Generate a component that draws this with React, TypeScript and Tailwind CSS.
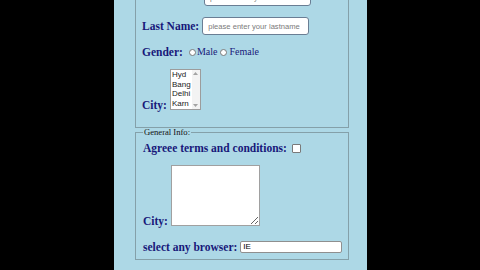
import React from "react";

const label =
  "font-['Liberation_Serif',serif] font-bold text-[11.5px] leading-[14px] text-[#18187a] whitespace-nowrap";
const textInput =
  "h-[18px] w-[107px] rounded-[3px] border border-[#6a7e94] bg-white px-[5px] font-['Liberation_Sans',sans-serif] text-[7.6px] text-black outline-none placeholder:text-[#7a7a7a]";

function Radio() {
  return <span className="inline-block h-[7px] w-[7px] shrink-0 rounded-full border border-[#7a7a7a] bg-white" />;
}

function ListBox() {
  const items = ["Hyd", "Bang", "Delhi", "Karn"];
  return (
    <div className="flex h-[41px] w-[31px] border border-[#9c9c9c] bg-white">
      <div className="flex-1 overflow-hidden pl-[1px] pt-[0px]">
        {items.map((c) => (
          <div
            key={c}
            className="whitespace-nowrap font-['Liberation_Sans',sans-serif] text-[8px] leading-[9.7px] text-[#222]"
          >
            {c}
          </div>
        ))}
      </div>
      <div className="flex w-[8px] flex-col items-center justify-between bg-[#f3f3f3] py-[2px]">
        <svg width="5" height="3" viewBox="0 0 5 3">
          <path d="M0 3 L2.5 0 L5 3 Z" fill="#a3a3a3" />
        </svg>
        <svg width="5" height="3" viewBox="0 0 5 3">
          <path d="M0 0 L2.5 3 L5 0 Z" fill="#a3a3a3" />
        </svg>
      </div>
    </div>
  );
}

export default function App() {
  return (
    <div className="flex h-[270px] w-[480px] overflow-hidden bg-black">
      <div className="ml-[114px] flex h-[270px] w-[253px] flex-col overflow-hidden bg-[#add8e6] pl-[21px]">
        {/* Fieldset 1 */}
        <fieldset className="-mt-[19px] w-[214px] shrink-0 border border-[#84a0a9] pb-[17px] pl-[6px] pt-[6px]">
          <div className="flex h-[18px] items-start gap-[3px]">
            <span className={`${label} -mt-[8px]`}>First Name:</span>
            <input className={textInput} placeholder="please enter your firstname" readOnly />
          </div>
          <div className="mt-[11px] flex h-[18px] items-center gap-[3px]">
            <span className={label}>Last Name:</span>
            <input className={textInput} placeholder="please enter your lastname" readOnly />
          </div>
          <div className="mt-[10px] flex h-[14px] items-center">
            <span className={label}>Gender:</span>
            <span className="ml-[6px] flex items-center gap-[1px]">
              <Radio />
              <span className="font-['Liberation_Serif',serif] text-[10px] leading-[14px] text-[#18187a]">Male</span>
            </span>
            <span className="ml-[3px] flex items-center gap-[2px]">
              <Radio />
              <span className="font-['Liberation_Serif',serif] text-[10px] leading-[14px] text-[#18187a]">Female</span>
            </span>
          </div>
          <div className="mt-[10px] flex items-end gap-[3px]">
            <span className={`${label} -mb-[2px]`}>City:</span>
            <ListBox />
          </div>
        </fieldset>

        {/* Fieldset 2 */}
        <fieldset className="w-[214px] shrink-0 border border-[#84a0a9] pb-[5px] pl-[7px] pt-[4px]">
          <legend className="ml-0 px-[1px] font-['Liberation_Serif',serif] text-[8.6px] leading-[9px] text-[#111]">
            General Info:
          </legend>
          <div className="flex h-[14px] items-center gap-[5px]">
            <span className={label}>Agreee terms and conditions:</span>
            <span className="mt-[1px] inline-block h-[9px] w-[9px] rounded-[1px] border border-[#7a7a7a] bg-white" />
          </div>
          <div className="mt-[10px] flex items-end gap-[3px]">
            <span className={`${label} -mb-[2px]`}>City:</span>
            <textarea
              readOnly
              className="h-[61px] w-[89px] border border-[#a0a0a0] bg-white outline-none"
            />
          </div>
          <div className="mt-[14px] flex h-[14px] items-center gap-[3px]">
            <span className={label}>select any browser:</span>
            <input
              readOnly
              value="IE"
              className="h-[12px] w-[102px] rounded-[2px] border border-[#8f8f8f] bg-white pl-[2px] font-['Liberation_Sans',sans-serif] text-[8px] text-black outline-none"
            />
          </div>
        </fieldset>
      </div>
    </div>
  );
}
